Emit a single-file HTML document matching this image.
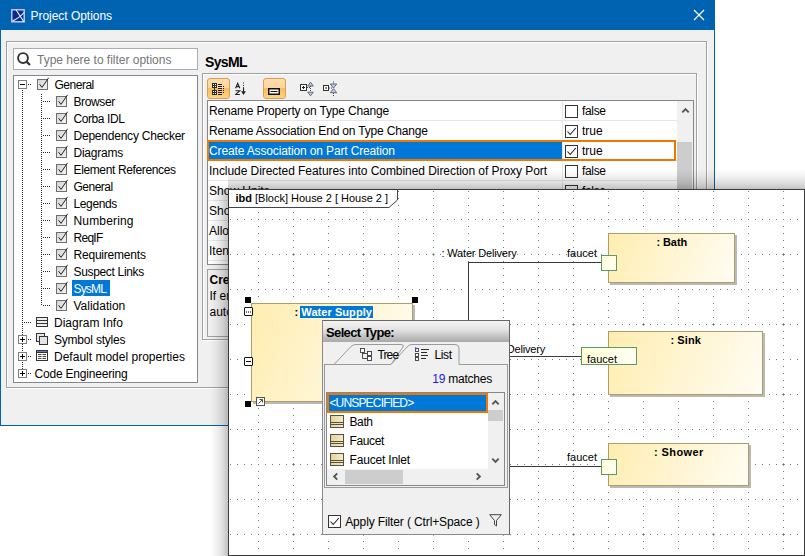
<!DOCTYPE html>
<html><head><meta charset="utf-8">
<style>
*{box-sizing:border-box;margin:0;padding:0}
html,body{width:805px;height:556px;overflow:hidden;background:#fff}
body{position:relative;font-family:"Liberation Sans",sans-serif;font-size:12px;color:#000}
.a{position:absolute}
.t{position:absolute;white-space:nowrap;line-height:17px;height:17px;font-size:12px}
.d{position:absolute;white-space:nowrap;line-height:14px;height:14px;font-size:11px}
#win{left:0;top:0;width:715px;height:426px;background:#f0f0f0;border:1px solid #0063b1}
#title{left:0;top:0;width:715px;height:30px;background:#0063b1}
.dv{position:absolute;width:1px;background-image:linear-gradient(#2a2a2a 50%,transparent 50%);background-size:1px 2px}
.dh{position:absolute;height:1px;background-image:linear-gradient(90deg,#2a2a2a 50%,transparent 50%);background-size:2px 1px}
.ex{position:absolute;width:9px;height:9px;border:1px solid #7e7e7e;background:#fff}
.ex:before{content:"";position:absolute;left:1px;top:3px;width:5px;height:1px;background:#000}
.ex.p:after{content:"";position:absolute;left:3px;top:1px;width:1px;height:5px;background:#000}
.row{position:absolute;left:0;width:469px;height:20px;border-bottom:1px solid #e6e6e6}
.vcb{position:absolute;width:13px;height:13px;border:1px solid #333;background:#fff}
.blk{position:absolute;border:1px solid #ad9d66;background:linear-gradient(112deg,#ffedb0 0%,#fff4cf 45%,#fffdf3 100%);box-shadow:2px 2px 0 #b9b9b9}
.port{position:absolute;border:1px solid #5a9a68;background:linear-gradient(110deg,#ffffd8,#fffff4)}
.hd{position:absolute;width:6px;height:6px;background:#000}
</style></head><body>
<div class="a" id="win"></div>
<div class="a" id="title"></div>
<svg class="a" style="left:10.500px;top:9px" width="14" height="14" viewBox="0 0 14 14"><rect x="0.800" y="0.800" width="12.400" height="12" fill="#0b2a92" stroke="#c4d2ee" stroke-width="1.400"/><path d="M5 0.800 L13 13 M1.500 12 Q9 8.500 13 3.500" stroke="#f4f7ff" stroke-width="1.100" fill="none"/></svg>
<svg class="a" style="left:693px;top:9px" width="12" height="12" viewBox="0 0 12 12"><path d="M1 1 L11 11 M11 1 L1 11" stroke="#fff" stroke-width="1.2" fill="none"/></svg>
<div class="a" style="left:6px;top:41px;width:701px;height:347px;border:1px solid #a0a0a0;box-shadow:inset 1px 1px 0 #fff,1px 1px 0 #fff"></div>
<div class="a" style="left:13px;top:48px;width:185px;height:22px;background:#fff;border:1px solid #abadb3"></div>
<svg class="a" style="left:17px;top:52px" width="16" height="16" viewBox="0 0 16 16"><circle cx="6" cy="6" r="4.900" stroke="#333" stroke-width="1.950" fill="none"/><path d="M9.600 9.600 L13 13" stroke="#333" stroke-width="2.200"/></svg>
<div class="a" style="left:13px;top:75px;width:185px;height:308px;background:#fff;border:1px solid #828790"></div>

<div class="a" id="t0" style="left:30.5px;top:6px;letter-spacing:-0.036px;font-size:12px;color:#fff;line-height:20px;white-space:nowrap">Project Options</div>
<div class="t" id="t1" style="left:37px;top:52px;letter-spacing:-0.013px;color:#767676">Type here to filter options</div>
<div class="ex" style="left:18px;top:80px"></div>
<div class="dh" style="left:28px;top:84px;width:4px"></div>
<svg class="a" style="left:37px;top:77px" width="14" height="13" viewBox="0 0 14 13"><defs><linearGradient id="cg1" x1="0" y1="0" x2="1" y2="1"><stop offset="0" stop-color="#d2d2d2"/><stop offset="1" stop-color="#f6f6f6"/></linearGradient></defs><rect x="0.5" y="2.5" width="10" height="10" fill="url(#cg1)" stroke="#6e6e6e"/><path d="M2.6 7.2 L5 10.4 L11.6 0.8" stroke="#222" stroke-width="1" fill="none"/></svg>
<div class="t" id="t2" style="left:54.5px;top:77px;letter-spacing:-0.486px;">General</div>
<div class="dh" style="left:43px;top:101px;width:8px"></div>
<svg class="a" style="left:56px;top:94px" width="14" height="13" viewBox="0 0 14 13"><defs><linearGradient id="cg2" x1="0" y1="0" x2="1" y2="1"><stop offset="0" stop-color="#d2d2d2"/><stop offset="1" stop-color="#f6f6f6"/></linearGradient></defs><rect x="0.5" y="2.5" width="10" height="10" fill="url(#cg2)" stroke="#6e6e6e"/><path d="M2.6 7.2 L5 10.4 L11.6 0.8" stroke="#222" stroke-width="1" fill="none"/></svg>
<div class="t" id="t3" style="left:73.5px;top:94px;letter-spacing:-0.388px;">Browser</div>
<div class="dh" style="left:43px;top:118px;width:8px"></div>
<svg class="a" style="left:56px;top:111px" width="14" height="13" viewBox="0 0 14 13"><defs><linearGradient id="cg3" x1="0" y1="0" x2="1" y2="1"><stop offset="0" stop-color="#d2d2d2"/><stop offset="1" stop-color="#f6f6f6"/></linearGradient></defs><rect x="0.5" y="2.5" width="10" height="10" fill="url(#cg3)" stroke="#6e6e6e"/><path d="M2.6 7.2 L5 10.4 L11.6 0.8" stroke="#222" stroke-width="1" fill="none"/></svg>
<div class="t" id="t4" style="left:73.5px;top:111px;letter-spacing:-0.411px;">Corba IDL</div>
<div class="dh" style="left:43px;top:135px;width:8px"></div>
<svg class="a" style="left:56px;top:128px" width="14" height="13" viewBox="0 0 14 13"><defs><linearGradient id="cg4" x1="0" y1="0" x2="1" y2="1"><stop offset="0" stop-color="#d2d2d2"/><stop offset="1" stop-color="#f6f6f6"/></linearGradient></defs><rect x="0.5" y="2.5" width="10" height="10" fill="url(#cg4)" stroke="#6e6e6e"/><path d="M2.6 7.2 L5 10.4 L11.6 0.8" stroke="#222" stroke-width="1" fill="none"/></svg>
<div class="t" id="t5" style="left:73.5px;top:128px;letter-spacing:-0.223px;">Dependency Checker</div>
<div class="dh" style="left:43px;top:152px;width:8px"></div>
<svg class="a" style="left:56px;top:145px" width="14" height="13" viewBox="0 0 14 13"><defs><linearGradient id="cg5" x1="0" y1="0" x2="1" y2="1"><stop offset="0" stop-color="#d2d2d2"/><stop offset="1" stop-color="#f6f6f6"/></linearGradient></defs><rect x="0.5" y="2.5" width="10" height="10" fill="url(#cg5)" stroke="#6e6e6e"/><path d="M2.6 7.2 L5 10.4 L11.6 0.8" stroke="#222" stroke-width="1" fill="none"/></svg>
<div class="t" id="t6" style="left:73.5px;top:145px;letter-spacing:-0.232px;">Diagrams</div>
<div class="dh" style="left:43px;top:169px;width:8px"></div>
<svg class="a" style="left:56px;top:162px" width="14" height="13" viewBox="0 0 14 13"><defs><linearGradient id="cg6" x1="0" y1="0" x2="1" y2="1"><stop offset="0" stop-color="#d2d2d2"/><stop offset="1" stop-color="#f6f6f6"/></linearGradient></defs><rect x="0.5" y="2.5" width="10" height="10" fill="url(#cg6)" stroke="#6e6e6e"/><path d="M2.6 7.2 L5 10.4 L11.6 0.8" stroke="#222" stroke-width="1" fill="none"/></svg>
<div class="t" id="t7" style="left:73.5px;top:162px;letter-spacing:-0.369px;">Element References</div>
<div class="dh" style="left:43px;top:186px;width:8px"></div>
<svg class="a" style="left:56px;top:179px" width="14" height="13" viewBox="0 0 14 13"><defs><linearGradient id="cg7" x1="0" y1="0" x2="1" y2="1"><stop offset="0" stop-color="#d2d2d2"/><stop offset="1" stop-color="#f6f6f6"/></linearGradient></defs><rect x="0.5" y="2.5" width="10" height="10" fill="url(#cg7)" stroke="#6e6e6e"/><path d="M2.6 7.2 L5 10.4 L11.6 0.8" stroke="#222" stroke-width="1" fill="none"/></svg>
<div class="t" id="t8" style="left:73.5px;top:179px;letter-spacing:-0.515px;">General</div>
<div class="dh" style="left:43px;top:203px;width:8px"></div>
<svg class="a" style="left:56px;top:196px" width="14" height="13" viewBox="0 0 14 13"><defs><linearGradient id="cg8" x1="0" y1="0" x2="1" y2="1"><stop offset="0" stop-color="#d2d2d2"/><stop offset="1" stop-color="#f6f6f6"/></linearGradient></defs><rect x="0.5" y="2.5" width="10" height="10" fill="url(#cg8)" stroke="#6e6e6e"/><path d="M2.6 7.2 L5 10.4 L11.6 0.8" stroke="#222" stroke-width="1" fill="none"/></svg>
<div class="t" id="t9" style="left:73.5px;top:196px;letter-spacing:-0.378px;">Legends</div>
<div class="dh" style="left:43px;top:220px;width:8px"></div>
<svg class="a" style="left:56px;top:213px" width="14" height="13" viewBox="0 0 14 13"><defs><linearGradient id="cg9" x1="0" y1="0" x2="1" y2="1"><stop offset="0" stop-color="#d2d2d2"/><stop offset="1" stop-color="#f6f6f6"/></linearGradient></defs><rect x="0.5" y="2.5" width="10" height="10" fill="url(#cg9)" stroke="#6e6e6e"/><path d="M2.6 7.2 L5 10.4 L11.6 0.8" stroke="#222" stroke-width="1" fill="none"/></svg>
<div class="t" id="t10" style="left:73.5px;top:213px;letter-spacing:0.166px;">Numbering</div>
<div class="dh" style="left:43px;top:237px;width:8px"></div>
<svg class="a" style="left:56px;top:230px" width="14" height="13" viewBox="0 0 14 13"><defs><linearGradient id="cg10" x1="0" y1="0" x2="1" y2="1"><stop offset="0" stop-color="#d2d2d2"/><stop offset="1" stop-color="#f6f6f6"/></linearGradient></defs><rect x="0.5" y="2.5" width="10" height="10" fill="url(#cg10)" stroke="#6e6e6e"/><path d="M2.6 7.2 L5 10.4 L11.6 0.8" stroke="#222" stroke-width="1" fill="none"/></svg>
<div class="t" id="t11" style="left:73.5px;top:230px;letter-spacing:-0.718px;">ReqIF</div>
<div class="dh" style="left:43px;top:254px;width:8px"></div>
<svg class="a" style="left:56px;top:247px" width="14" height="13" viewBox="0 0 14 13"><defs><linearGradient id="cg11" x1="0" y1="0" x2="1" y2="1"><stop offset="0" stop-color="#d2d2d2"/><stop offset="1" stop-color="#f6f6f6"/></linearGradient></defs><rect x="0.5" y="2.5" width="10" height="10" fill="url(#cg11)" stroke="#6e6e6e"/><path d="M2.6 7.2 L5 10.4 L11.6 0.8" stroke="#222" stroke-width="1" fill="none"/></svg>
<div class="t" id="t12" style="left:73.5px;top:247px;letter-spacing:-0.209px;">Requirements</div>
<div class="dh" style="left:43px;top:271px;width:8px"></div>
<svg class="a" style="left:56px;top:264px" width="14" height="13" viewBox="0 0 14 13"><defs><linearGradient id="cg12" x1="0" y1="0" x2="1" y2="1"><stop offset="0" stop-color="#d2d2d2"/><stop offset="1" stop-color="#f6f6f6"/></linearGradient></defs><rect x="0.5" y="2.5" width="10" height="10" fill="url(#cg12)" stroke="#6e6e6e"/><path d="M2.6 7.2 L5 10.4 L11.6 0.8" stroke="#222" stroke-width="1" fill="none"/></svg>
<div class="t" id="t13" style="left:73.5px;top:264px;letter-spacing:-0.332px;">Suspect Links</div>
<div class="dh" style="left:43px;top:288px;width:8px"></div>
<svg class="a" style="left:56px;top:281px" width="14" height="13" viewBox="0 0 14 13"><defs><linearGradient id="cg13" x1="0" y1="0" x2="1" y2="1"><stop offset="0" stop-color="#d2d2d2"/><stop offset="1" stop-color="#f6f6f6"/></linearGradient></defs><rect x="0.5" y="2.5" width="10" height="10" fill="url(#cg13)" stroke="#6e6e6e"/><path d="M2.6 7.2 L5 10.4 L11.6 0.8" stroke="#222" stroke-width="1" fill="none"/></svg>
<div class="a" style="left:72px;top:280px;width:38px;height:16px;background:#0078d7"></div>
<div class="t" id="t14" style="left:73.5px;top:281px;letter-spacing:-0.838px;color:#fff">SysML</div>
<div class="dh" style="left:43px;top:305px;width:8px"></div>
<svg class="a" style="left:56px;top:298px" width="14" height="13" viewBox="0 0 14 13"><defs><linearGradient id="cg14" x1="0" y1="0" x2="1" y2="1"><stop offset="0" stop-color="#d2d2d2"/><stop offset="1" stop-color="#f6f6f6"/></linearGradient></defs><rect x="0.5" y="2.5" width="10" height="10" fill="url(#cg14)" stroke="#6e6e6e"/><path d="M2.6 7.2 L5 10.4 L11.6 0.8" stroke="#222" stroke-width="1" fill="none"/></svg>
<div class="t" id="t15" style="left:73.5px;top:298px;letter-spacing:-0.003px;">Validation</div>
<div class="dv" style="left:41px;top:94px;height:212px"></div>
<div class="dv" style="left:22px;top:90px;height:279px"></div>
<div class="dh" style="left:24px;top:322px;width:8px"></div>
<svg class="a" style="left:36px;top:317px" width="12" height="10" viewBox="0 0 12 10"><rect x="0.5" y="0.5" width="11" height="9" fill="#fff" stroke="#333"/><path d="M1 3.5H11M1 6.5H11" stroke="#333"/><path d="M1 2H11M1 5H11M1 8H11" stroke="#ddd"/></svg>
<div class="t" id="t16" style="left:54px;top:315px;letter-spacing:0.016px;">Diagram Info</div>
<div class="ex p" style="left:18px;top:335px"></div>
<div class="dh" style="left:28px;top:339px;width:4px"></div>
<svg class="a" style="left:36px;top:333px" width="12" height="12" viewBox="0 0 12 12"><rect x="0.5" y="0.5" width="8" height="8" fill="#e8e8e8" stroke="#333"/><rect x="3.5" y="3.5" width="8" height="8" fill="#e4e4e4" stroke="#333"/></svg>
<div class="t" id="t17" style="left:54px;top:332px;letter-spacing:-0.210px;">Symbol styles</div>
<div class="ex p" style="left:18px;top:352px"></div>
<div class="dh" style="left:28px;top:356px;width:4px"></div>
<svg class="a" style="left:36px;top:350px" width="12" height="11" viewBox="0 0 12 11"><rect x="0.5" y="0.5" width="11" height="10" fill="#fff" stroke="#333"/><path d="M1 1.5H11" stroke="#5b7fc4" stroke-width="1"/><path d="M1 2.5H11" stroke="#333"/><path d="M2 4.500H5.500M6.500 4.500H10M2 6.500H5.500M6.500 6.500H10M2 8.500H5.500M6.500 8.500H10" stroke="#444"/></svg>
<div class="t" id="t18" style="left:54px;top:349px;letter-spacing:0.007px;">Default model properties</div>
<div class="ex p" style="left:18px;top:369px"></div>
<div class="dh" style="left:28px;top:373px;width:4px"></div>
<div class="t" id="t19" style="left:34.5px;top:366px;letter-spacing:-0.199px;">Code Engineering</div>
<div class="t" id="t20" style="left:205px;top:54px;letter-spacing:-0.625px;font-weight:bold;font-size:14px">SysML</div>
<div class="a" style="left:202px;top:73px;width:495px;height:267px;border:1px solid #a0a0a0;box-shadow:inset 1px 1px 0 #fff,1px 1px 0 #fff"></div>
<div class="a" style="left:207px;top:78px;width:23px;height:21px;background:linear-gradient(#fedcad 0%,#fdd6a0 45%,#f9bc5c 50%,#fcd482 100%);border:1px solid #d9a055;border-radius:3px"></div>
<svg class="a" style="left:212px;top:83px" width="13" height="13" viewBox="0 0 13 13" shape-rendering="crispEdges"><rect x="0.5" y="0.5" width="4" height="4" fill="#fff" stroke="#2a2a2a"/><rect x="0.5" y="7.500" width="4" height="4" fill="#fff" stroke="#2a2a2a"/><path d="M2.500 1V4M1 2.500H4M2.500 8V11M1 9.500H4M2.500 5V7" stroke="#2a2a2a"/><path d="M6 1.500H10M6 3.500H10M11 3.500H12M6 5.500H10M11 5.500H12M6 7.500H10M11 7.500H12M6 9.500H10M11 9.500H12M6 11.500H10" stroke="#1a1a1a"/></svg>
<svg class="a" style="left:235px;top:82px" width="13" height="14" viewBox="0 0 13 14"><path d="M0.600 6.300L2.700 1.300L4.800 6.300M1.300 4.600H4.100" stroke="#222" stroke-width="1.1" fill="none"/><path d="M0.500 8.800H4.700L0.500 12.500H4.900" stroke="#222" stroke-width="1.1" fill="none"/><path d="M8.500 0.500V1.500M8.500 3V4" stroke="#222"/><path d="M8.500 5.200V10" stroke="#222" stroke-width="1.1"/><path d="M6.100 9.300H10.900L8.500 13Z" fill="#222"/></svg>
<div class="a" style="left:263px;top:78px;width:23px;height:21px;background:linear-gradient(#fedcad 0%,#fdd6a0 45%,#f9bc5c 50%,#fcd482 100%);border:1px solid #d9a055;border-radius:3px"></div>
<svg class="a" style="left:268px;top:88px" width="12" height="7" viewBox="0 0 12 7"><rect x="0" y="0" width="12" height="7" fill="#111"/><rect x="1.500" y="1.500" width="9" height="4" fill="#fff"/><rect x="2.500" y="3" width="7" height="1" fill="#111"/></svg>
<svg class="a" style="left:300px;top:81px" width="15" height="16" viewBox="0 0 15 16"><rect x="0.5" y="3.500" width="6" height="6" fill="#fff" stroke="#333"/><path d="M2 6.500H5M3.500 5V8" stroke="#222"/><path d="M7 6.500H10" stroke="#444" stroke-dasharray="1 1"/><path d="M10.500 5V11" stroke="#444" stroke-dasharray="1 1"/><path d="M7.700 5L10.500 1.200L13.300 5Z M7.700 11.200L10.500 14.800L13.300 11.200Z" stroke="#4a4f60" stroke-width="0.8" fill="#c6cdea"/></svg>
<svg class="a" style="left:323px;top:81px" width="15" height="16" viewBox="0 0 15 16"><rect x="0.5" y="4.500" width="5" height="5" fill="#fff" stroke="#333"/><path d="M2 7H4" stroke="#222"/><path d="M6 7H9" stroke="#444" stroke-dasharray="1 1"/><path d="M10.500 0.500V3M10.500 12V15" stroke="#444" stroke-dasharray="1 1"/><path d="M7.300 3L10.500 7L13.700 3Z M7.300 11.700L10.500 7.700L13.700 11.700Z" stroke="#4a4f60" stroke-width="0.8" fill="#c6cdea"/></svg>
<div class="a" style="left:207px;top:100px;width:487px;height:165px;background:#fff;border:1px solid #828790;overflow:hidden">
<div class="row" style="top:0px"></div>
<div class="t" id="t21" style="left:1px;top:2px;letter-spacing:-0.178px;">Rename Property on Type Change</div>
<div class="vcb" style="left:357px;top:4px"></div>
<div class="t" id="t22" style="left:374px;top:2px;letter-spacing:-0.332px;">false</div>
<div class="row" style="top:20px"></div>
<div class="t" id="t23" style="left:1px;top:22px;letter-spacing:-0.177px;">Rename Association End on Type Change</div>
<div class="vcb" style="left:357px;top:24px"></div>
<svg class="a" style="left:358px;top:25px" width="11" height="11" viewBox="0 0 11 11"><path d="M1.5 5.500L4.200 8.500L9.800 2" stroke="#222" stroke-width="1.1" fill="none"/></svg>
<div class="t" id="t24" style="left:374px;top:22px;letter-spacing:0.003px;">true</div>
<div class="row" style="top:40px"></div>
<div class="a" style="left:0;top:40px;width:355px;height:20px;background:#0078d7"></div>
<div class="t" id="t25" style="left:1px;top:42px;letter-spacing:-0.139px;color:#fff">Create Association on Part Creation</div>
<div class="vcb" style="left:357px;top:44px"></div>
<svg class="a" style="left:358px;top:45px" width="11" height="11" viewBox="0 0 11 11"><path d="M1.5 5.500L4.200 8.500L9.800 2" stroke="#222" stroke-width="1.1" fill="none"/></svg>
<div class="t" id="t26" style="left:374px;top:42px;letter-spacing:0.003px;">true</div>
<div class="row" style="top:60px"></div>
<div class="t" id="t27" style="left:1px;top:62px;letter-spacing:-0.056px;">Include Directed Features into Combined Direction of Proxy Port</div>
<div class="vcb" style="left:357px;top:64px"></div>
<div class="t" id="t28" style="left:374px;top:62px;letter-spacing:-0.332px;">false</div>
<div class="row" style="top:80px"></div>
<div class="t" id="t29" style="left:1px;top:82px;letter-spacing:0.000px;">Show Units</div>
<div class="vcb" style="left:357px;top:84px"></div>
<div class="t" id="t30" style="left:374px;top:82px;letter-spacing:-0.332px;">false</div>
<div class="row" style="top:100px"></div>
<div class="t" id="t31" style="left:1px;top:102px;letter-spacing:0.000px;">Sho</div>
<div class="vcb" style="left:357px;top:104px"></div>
<div class="t" id="t32" style="left:374px;top:102px;letter-spacing:-0.332px;">false</div>
<div class="row" style="top:120px"></div>
<div class="t" id="t33" style="left:1px;top:122px;letter-spacing:0.000px;">Allo</div>
<div class="vcb" style="left:357px;top:124px"></div>
<div class="t" id="t34" style="left:374px;top:122px;letter-spacing:-0.332px;">false</div>
<div class="row" style="top:140px"></div>
<div class="t" id="t35" style="left:1px;top:142px;letter-spacing:0.000px;">Iten</div>
<div class="vcb" style="left:357px;top:144px"></div>
<div class="t" id="t36" style="left:374px;top:142px;letter-spacing:-0.332px;">false</div>
<div class="a" style="left:354px;top:0;width:1px;height:165px;background:#e6e6e6"></div>
<div class="a" style="left:469px;top:0;width:17px;height:165px;background:#f0f0f0"></div>
<svg class="a" style="left:473px;top:6px" width="9" height="6" viewBox="0 0 9 6"><path d="M1.300 5.300L4.500 2.100L7.700 5.300" stroke="#555" stroke-width="1.900" fill="none"/></svg>
<div class="a" style="left:469px;top:41px;width:15px;height:125px;background:#cdcdcd"></div>
</div>
<div class="a" style="left:207px;top:140px;width:469px;height:21px;border:2px solid #f07800"></div>
<div class="a" style="left:207px;top:269px;width:487px;height:68px;border:1px solid #a0a0a0;background:#f0f0f0"></div>
<div class="t" id="t37" style="left:209.5px;top:272px;letter-spacing:0.000px;font-weight:bold">Cre</div>
<div class="t" id="t38" style="left:209.5px;top:288px;letter-spacing:0.000px;">If en</div>
<div class="t" id="t39" style="left:209.5px;top:304px;letter-spacing:0.000px;">auto</div>
<div class="a" style="left:228px;top:189px;width:577px;height:367px;background:#fff;border:1px solid #3a3a3a"></div>
<div class="a" style="left:228px;top:169px;width:577px;height:20px;background:linear-gradient(180deg,transparent 0%,rgba(0,0,0,.05) 35%,rgba(0,0,0,.13) 70%,rgba(0,0,0,.24) 100%)"></div>
<div class="a" style="left:210px;top:189px;width:18px;height:367px;background:linear-gradient(90deg,transparent 0%,rgba(0,0,0,.05) 35%,rgba(0,0,0,.13) 70%,rgba(0,0,0,.24) 100%)"></div>
<div class="a" style="left:210px;top:169px;width:18px;height:20px;background:radial-gradient(ellipse 18px 20px at 100%% 100%%,rgba(0,0,0,.23) 0%%,rgba(0,0,0,.11) 30%%,rgba(0,0,0,.04) 65%%,transparent 100%%)"></div>
<svg class="a" style="left:229px;top:190px" width="575" height="365" viewBox="229 190 575 365" shape-rendering="crispEdges"><defs><pattern id="g" x="258" y="219" width="70" height="70" patternUnits="userSpaceOnUse">
<rect x="0" y="0" width="1" height="1" fill="#787878"/><rect x="0" y="35" width="1" height="1" fill="#787878"/>
<rect x="7" y="0" width="1" height="1" fill="#787878"/><rect x="7" y="35" width="1" height="1" fill="#787878"/>
<rect x="0" y="7" width="1" height="1" fill="#787878"/><rect x="35" y="7" width="1" height="1" fill="#787878"/>
<rect x="14" y="0" width="1" height="1" fill="#787878"/><rect x="14" y="35" width="1" height="1" fill="#787878"/>
<rect x="0" y="14" width="1" height="1" fill="#787878"/><rect x="35" y="14" width="1" height="1" fill="#787878"/>
<rect x="21" y="0" width="1" height="1" fill="#787878"/><rect x="21" y="35" width="1" height="1" fill="#787878"/>
<rect x="0" y="21" width="1" height="1" fill="#787878"/><rect x="35" y="21" width="1" height="1" fill="#787878"/>
<rect x="28" y="0" width="1" height="1" fill="#787878"/><rect x="28" y="35" width="1" height="1" fill="#787878"/>
<rect x="0" y="28" width="1" height="1" fill="#787878"/><rect x="35" y="28" width="1" height="1" fill="#787878"/>
<rect x="35" y="0" width="1" height="1" fill="#787878"/><rect x="35" y="35" width="1" height="1" fill="#787878"/>
<rect x="42" y="0" width="1" height="1" fill="#787878"/><rect x="42" y="35" width="1" height="1" fill="#787878"/>
<rect x="0" y="42" width="1" height="1" fill="#787878"/><rect x="35" y="42" width="1" height="1" fill="#787878"/>
<rect x="49" y="0" width="1" height="1" fill="#787878"/><rect x="49" y="35" width="1" height="1" fill="#787878"/>
<rect x="0" y="49" width="1" height="1" fill="#787878"/><rect x="35" y="49" width="1" height="1" fill="#787878"/>
<rect x="56" y="0" width="1" height="1" fill="#787878"/><rect x="56" y="35" width="1" height="1" fill="#787878"/>
<rect x="0" y="56" width="1" height="1" fill="#787878"/><rect x="35" y="56" width="1" height="1" fill="#787878"/>
<rect x="63" y="0" width="1" height="1" fill="#787878"/><rect x="63" y="35" width="1" height="1" fill="#787878"/>
<rect x="0" y="63" width="1" height="1" fill="#787878"/><rect x="35" y="63" width="1" height="1" fill="#787878"/>
<rect x="34" y="35" width="3" height="1" fill="#a0a0a0"/><rect x="35" y="34" width="1" height="3" fill="#a0a0a0"/><rect x="35" y="35" width="1" height="1" fill="#666"/>
</pattern></defs><rect x="229" y="190" width="575" height="365" fill="url(#g)"/></svg>
<svg class="a" style="left:229px;top:190px" width="172" height="19" viewBox="0 0 172 19"><path d="M0 0H168.500V10L160 17.500H0Z" fill="#fff"/><path d="M168.500 0V10L160 17.500H0" fill="none" stroke="#444" stroke-width="1"/></svg>
<div class="d" id="t40" style="left:235.5px;top:191px;letter-spacing:-0.012px;"><b>ibd</b> [Block] House 2 [ House 2 ]</div>
<div class="a" style="left:468px;top:262px;width:1px;height:70px;background:#3a3a3a"></div>
<div class="a" style="left:468px;top:262px;width:133px;height:1px;background:#3a3a3a"></div>
<div class="a" style="left:500px;top:356px;width:82px;height:1px;background:#3a3a3a"></div>
<div class="a" style="left:500px;top:466px;width:101px;height:1px;background:#3a3a3a"></div>
<div class="d" id="t41" style="left:441.5px;top:246px;letter-spacing:-0.171px;">: Water Delivery</div>
<div class="d" id="t42" style="left:470px;top:342px;letter-spacing:-0.177px;">: Water Delivery</div>
<div class="d" id="t43" style="left:567px;top:246px;letter-spacing:0.005px;">faucet</div>
<div class="d" id="t44" style="left:567px;top:450px;letter-spacing:0.005px;">faucet</div>
<div class="blk" style="left:608px;top:233px;width:127px;height:50px"></div>
<div class="d" id="t45" style="left:656.4px;top:235px;letter-spacing:-0.062px;font-weight:bold">: Bath</div>
<div class="blk" style="left:608px;top:331px;width:155px;height:64px"></div>
<div class="d" id="t46" style="left:670.4px;top:333px;letter-spacing:0.108px;font-weight:bold">: Sink</div>
<div class="blk" style="left:608px;top:443px;width:141px;height:43px"></div>
<div class="d" id="t47" style="left:654px;top:445px;letter-spacing:0.418px;font-weight:bold">: Shower</div>
<div class="port" style="left:601px;top:255px;width:16px;height:16px"></div>
<div class="port" style="left:601px;top:459px;width:16px;height:16px"></div>
<div class="port" style="left:581px;top:347px;width:56px;height:18px"></div>
<div class="d" id="t48" style="left:587px;top:352px;letter-spacing:0.005px;">faucet</div>
<div class="blk" style="left:251px;top:303px;width:162px;height:99px"></div>
<div class="a" style="left:300px;top:306px;width:73px;height:12px;background:#0078d7"></div>
<div class="d" id="t49" style="left:294.5px;top:305px;letter-spacing:0.062px;font-weight:bold">: <span style="color:#fff">Water Supply</span></div>
<div class="hd" style="left:245px;top:297px"></div>
<div class="hd" style="left:412px;top:297px"></div>
<div class="hd" style="left:245px;top:401px"></div>
<div class="a" style="left:244px;top:307px;width:9px;height:9px;border:1px solid #111;border-radius:1px;background:#fff"></div>
<div class="a" style="left:246px;top:311px;width:1px;height:2px;background:#777"></div>
<div class="a" style="left:248px;top:311px;width:1px;height:2px;background:#777"></div>
<div class="a" style="left:250px;top:311px;width:1px;height:2px;background:#777"></div>
<div class="a" style="left:244px;top:357px;width:9px;height:9px;border:1px solid #111;border-radius:1px;background:#fff"></div><div class="a" style="left:246px;top:361px;width:5px;height:1px;background:#111"></div>
<svg class="a" style="left:256px;top:397px" width="9" height="9" viewBox="0 0 9 9"><rect x="0.5" y="0.5" width="8" height="8" fill="#fff" stroke="#555"/><path d="M2.500 6.500L6 3M3.500 2.500H6.500V5.500" stroke="#333" stroke-width="0.9" fill="none"/></svg>
<div class="a" style="left:322px;top:320px;width:188px;height:215px;background:#f0f0f0;border:1px solid #8a8a8a;border-top-color:#666;border-right-color:#666"></div>
<div class="a" style="left:323px;top:321px;width:186px;height:21px;background:linear-gradient(#f4f4f4,#e4e4e4 40%,#a8a8a8)"></div>
<div class="t" id="t50" style="left:326px;top:324px;letter-spacing:-0.635px;font-weight:bold;font-size:13px">Select Type:</div>
<svg class="a" style="left:323px;top:343px" width="186" height="24" viewBox="0 0 186 24"><path d="M11 21.500 L28 3.500 Q30 1.500 33 1.500 H78 Q81 1.500 80 4 L68 21.500" fill="#f0f0f0" stroke="#9a9a9a"/><path d="M1.500 24V21.500H68 L84 4 Q86 1.500 89 1.500 H132 Q136 1.500 136 5 V21.500 H184.500 V24" fill="#f0f0f0" stroke="#9a9a9a"/></svg>
<svg class="a" style="left:360px;top:348px" width="13" height="13" viewBox="0 0 13 13"><g stroke="#3a3a3a" stroke-width="0.9"><rect x="0.5" y="0.5" width="4" height="4" fill="#fff"/><rect x="7.500" y="3.500" width="4" height="4" fill="#fff"/><rect x="7.500" y="8.500" width="4" height="4" fill="#fff"/><path d="M2.500 5V10.500H7.500M2.500 5.500H7.500" fill="none"/></g></svg>
<div class="t" id="t51" style="left:377.5px;top:347px;letter-spacing:-0.884px;">Tree</div>
<svg class="a" style="left:415px;top:347px" width="14" height="14" viewBox="0 0 14 14"><g stroke="#3a3a3a" stroke-width="0.9"><rect x="0.5" y="1.500" width="3" height="3" fill="#fff"/><rect x="0.5" y="6.500" width="3" height="3" fill="#fff"/><rect x="0.5" y="10.500" width="3" height="3" fill="#fff"/></g><path d="M6 2.500H14M6 5.500H12M6 8.500H13M6 11.500H11" stroke="#2a2a2a" stroke-width="1" shape-rendering="crispEdges"/><path d="M0 0L3 1.500L0 3Z" fill="#2a5bd7"/></svg>
<div class="t" id="t52" style="left:434.5px;top:347px;letter-spacing:-0.397px;">List</div>
<div class="a" style="left:324px;top:364px;width:184px;height:124px;border:1px solid #9a9a9a;border-top:none"></div>
<div class="t" id="t53" style="left:432.3px;top:371px;letter-spacing:-0.245px;"><span style="color:#1a1ae6">19</span> matches</div>
<div class="a" style="left:326px;top:392px;width:179px;height:94px;background:#fff;border:1px solid #828790"></div>
<div class="a" style="left:327px;top:393px;width:161px;height:20px;background:#0078d7;border:2px solid #f07800"></div>
<div class="t" id="t54" style="left:329.4px;top:395px;letter-spacing:-0.823px;color:#fff">&lt;UNSPECIFIED&gt;</div>
<svg class="a" style="left:330px;top:415px" width="14" height="13" viewBox="0 0 14 13"><defs><linearGradient id="ig0" x1="0" y1="0" x2="1" y2="0"><stop offset="0" stop-color="#e3d39c"/><stop offset="1" stop-color="#f4ecd0"/></linearGradient></defs><rect x="0.5" y="0.5" width="13" height="12" fill="url(#ig0)" stroke="#5a5238"/><path d="M1 7.500H13M1 9.500H13" stroke="#5a5238"/></svg>
<div class="t" id="t55" style="left:349.5px;top:414px;letter-spacing:-0.397px;">Bath</div>
<svg class="a" style="left:330px;top:434px" width="14" height="13" viewBox="0 0 14 13"><defs><linearGradient id="ig1" x1="0" y1="0" x2="1" y2="0"><stop offset="0" stop-color="#e3d39c"/><stop offset="1" stop-color="#f4ecd0"/></linearGradient></defs><rect x="0.5" y="0.5" width="13" height="12" fill="url(#ig1)" stroke="#5a5238"/><path d="M1 7.500H13M1 9.500H13" stroke="#5a5238"/></svg>
<div class="t" id="t56" style="left:349.5px;top:433px;letter-spacing:-0.365px;">Faucet</div>
<svg class="a" style="left:330px;top:453px" width="14" height="13" viewBox="0 0 14 13"><defs><linearGradient id="ig2" x1="0" y1="0" x2="1" y2="0"><stop offset="0" stop-color="#e3d39c"/><stop offset="1" stop-color="#f4ecd0"/></linearGradient></defs><rect x="0.5" y="0.5" width="13" height="12" fill="url(#ig2)" stroke="#5a5238"/><path d="M1 7.500H13M1 9.500H13" stroke="#5a5238"/></svg>
<div class="t" id="t57" style="left:349.5px;top:452px;letter-spacing:-0.184px;">Faucet Inlet</div>
<div class="a" style="left:488px;top:393px;width:16px;height:76px;background:#f0f0f0"></div>
<svg class="a" style="left:491px;top:398.500px" width="9" height="6" viewBox="0 0 9 6"><path d="M1.300 5.300L4.500 2.100L7.700 5.300" stroke="#555" stroke-width="1.900" fill="none"/></svg>
<svg class="a" style="left:491px;top:457.500px" width="9" height="6" viewBox="0 0 9 6"><path d="M1.300 0.700L4.500 3.900L7.700 0.700" stroke="#555" stroke-width="1.900" fill="none"/></svg>
<div class="a" style="left:488px;top:410px;width:15px;height:11px;background:#cdcdcd"></div>
<div class="a" style="left:327px;top:469px;width:177px;height:16px;background:#f0f0f0"></div>
<svg class="a" style="left:332px;top:472px" width="6" height="9" viewBox="0 0 6 9"><path d="M5.300 1.300L2.100 4.500L5.300 7.700" stroke="#555" stroke-width="1.900" fill="none"/></svg>
<svg class="a" style="left:476px;top:472px" width="6" height="9" viewBox="0 0 6 9"><path d="M0.700 1.300L3.900 4.500L0.700 7.700" stroke="#555" stroke-width="1.900" fill="none"/></svg>
<div class="a" style="left:345px;top:470px;width:58px;height:14px;background:#cdcdcd"></div>
<div class="vcb" style="left:328px;top:515px"></div>
<svg class="a" style="left:329px;top:516px" width="11" height="11" viewBox="0 0 11 11"><path d="M1.5 5.500L4.200 8.500L9.800 2" stroke="#222" stroke-width="1.1" fill="none"/></svg>
<div class="t" id="t58" style="left:345.2px;top:514px;letter-spacing:-0.123px;">Apply Filter ( Ctrl+Space )</div>
<svg class="a" style="left:489px;top:514px" width="13" height="13" viewBox="0 0 13 13"><path d="M0.7 0.7H12.300L7.500 6.500V12L5.500 10.500V6.500Z" fill="none" stroke="#444"/></svg>
</body></html>
